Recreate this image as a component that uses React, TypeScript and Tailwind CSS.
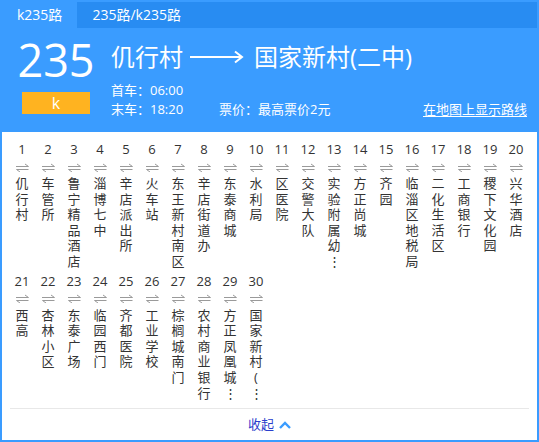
import React from "react";

interface Station {
  no: number;
  name: string;
}

const stations: Station[] = [
  { no: 1, name: "仉行村" },
  { no: 2, name: "车管所" },
  { no: 3, name: "鲁宁精品酒店" },
  { no: 4, name: "淄博七中" },
  { no: 5, name: "辛店派出所" },
  { no: 6, name: "火车站" },
  { no: 7, name: "东王新村南区" },
  { no: 8, name: "辛店街道办" },
  { no: 9, name: "东泰商城" },
  { no: 10, name: "水利局" },
  { no: 11, name: "区医院" },
  { no: 12, name: "交警大队" },
  { no: 13, name: "实验附属幼儿园" },
  { no: 14, name: "方正尚城" },
  { no: 15, name: "齐园" },
  { no: 16, name: "临淄区地税局" },
  { no: 17, name: "二化生活区" },
  { no: 18, name: "工商银行" },
  { no: 19, name: "稷下文化园" },
  { no: 20, name: "兴华酒店" },
  { no: 21, name: "西高" },
  { no: 22, name: "杏林小区" },
  { no: 23, name: "东泰广场" },
  { no: 24, name: "临园西门" },
  { no: 25, name: "齐都医院" },
  { no: 26, name: "工业学校" },
  { no: 27, name: "棕榈城南门" },
  { no: 28, name: "农村商业银行" },
  { no: 29, name: "方正凤凰城站点" },
  { no: 30, name: "国家新村(二中)" },
];

// names longer than 6 chars get cut to 5 plus a vertical ellipsis
function splitName(name: string): string[] {
  const chars = Array.from(name);
  if (chars.length <= 6) return chars;
  return [...chars.slice(0, 5), "⋮"];
}

function SwapIcon() {
  return (
    <svg width="13" height="9" viewBox="0 0 13 9" fill="none">
      <path d="M0 3.5H12.5L9 1" stroke="#9a9a9a" strokeWidth="1" />
      <path d="M12.5 6.5H0.5L4 9" stroke="#9a9a9a" strokeWidth="1" />
    </svg>
  );
}

function StationColumn({ station }: { station: Station }) {
  return (
    <div className="flex flex-col items-center text-[13px] text-[#333]">
      <div className="h-[18px] leading-[18px]">{station.no}</div>
      <div className="h-[18px] flex items-center">
        <SwapIcon />
      </div>
      {splitName(station.name).map((c, i) => (
        <div key={i} className="h-[15.6px] leading-[15.6px]">
          {c}
        </div>
      ))}
    </div>
  );
}

export default function App() {
  return (
    <div
      className="w-[539px] h-[442px] border-2 border-[#3a9cff] bg-white flex flex-col"
      style={{ fontFamily: '"Open Sans", "Noto Sans CJK SC", sans-serif' }}
    >
      {/* tabs */}
      <div className="h-[26px] bg-[#288cf2] flex text-[14px] text-white">
        <div className="bg-[#3a9cff] px-[15px] leading-[26px]">k235路</div>
        <div className="pl-[15px] leading-[26px]">235路/k235路</div>
      </div>

      {/* line header */}
      <div className="h-[104px] bg-[#3a9cff] flex text-white">
        <div className="ml-[16px] w-[76px] flex flex-col items-center">
          <div className="mt-[8px] text-[45px] leading-[48px]">235</div>
          <div className="mt-[8px] w-[68px] h-[22px] bg-[#ffb320] text-[16px] leading-[22px] text-center">
            k
          </div>
        </div>
        <div className="flex-1 ml-[17px] pr-[10px] flex flex-col">
          <div className="mt-[14px] flex items-center text-[24px] leading-[30px]">
            <span>仉行村</span>
            <svg className="ml-[7px] mr-[10px]" width="54" height="14" viewBox="0 0 54 14" fill="none">
              <path d="M0 7H52" stroke="white" strokeWidth="2" />
              <path d="M45 1.5L52 7L45 12.5" stroke="white" strokeWidth="2" />
            </svg>
            <span>国家新村(二中)</span>
          </div>
          <div className="mt-[9px] text-[13px] leading-[19px]">首车：06:00</div>
          <div className="flex text-[13px] leading-[19px]">
            <span className="w-[108px]">末车：18:20</span>
            <span>票价：最高票价2元</span>
            <span className="ml-auto underline underline-offset-2">在地图上显示路线</span>
          </div>
        </div>
      </div>

      {/* stations */}
      <div className="pl-[7px] pt-[8px] grid grid-cols-[repeat(20,26px)] gap-y-[2px] content-start">
        {stations.map((s) => (
          <StationColumn key={s.no} station={s} />
        ))}
      </div>

      <div className="mt-auto mx-[8px] border-t border-[#e8e8e8]" />
      <div className="h-[31px] flex items-center justify-center gap-[5px]">
        <span className="text-[13px] text-[#2b3fcc]">收起</span>
        <svg width="12" height="8" viewBox="0 0 12 8" fill="none">
          <path d="M1 7L6 2L11 7" stroke="#3a9cff" strokeWidth="2.4" />
        </svg>
      </div>
    </div>
  );
}
